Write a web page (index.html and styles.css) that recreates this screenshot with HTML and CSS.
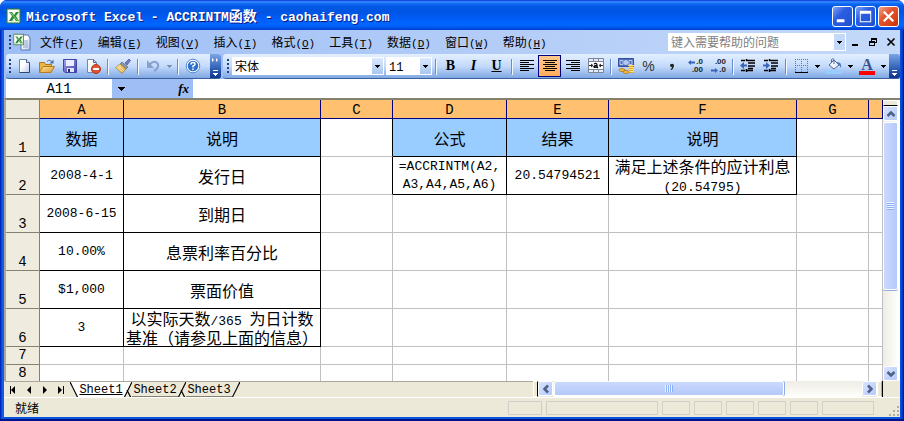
FILE: index.html
```html
<!DOCTYPE html>
<html lang="zh-CN">
<head>
<meta charset="utf-8">
<title>Microsoft Excel - ACCRINTM函数</title>
<link rel="stylesheet" href="styles.css">
</head>
<body>
<svg class="defs" aria-hidden="true">
  <defs>
    <linearGradient id="paper" x1="0" y1="0" x2="1" y2="1"><stop offset=".4" stop-color="#fff"/><stop offset="1" stop-color="#b4c8ea"/></linearGradient>
    <linearGradient id="disk" x1="0" y1="0" x2="1" y2="1"><stop offset="0" stop-color="#a4a5f0"/><stop offset="1" stop-color="#3b40a8"/></linearGradient>
    <linearGradient id="gold" x1="0" y1="0" x2="1" y2="1"><stop offset="0" stop-color="#ffe9a0"/><stop offset="1" stop-color="#d99628"/></linearGradient>
    <symbol id="down" viewBox="0 0 5 3"><path d="M0 0h5v1H4v1H3v1H2V2H1V1H0z"/></symbol>
    <symbol id="excel" viewBox="0 0 16 16"><path d="M1 1h13v14H1z" fill="#e9f3df" stroke="#2f7a36"/><path d="M2 2h9v10H2z" fill="#fff"/><path d="M3 4h3l2 3 2-3h3L10 8l3 5h-3l-2-3-2 3H3l3-5z" fill="#2c8c38"/><path d="M4 5h1l6 7h1" stroke="#8ccf70" fill="none"/></symbol>
    <symbol id="chevron" viewBox="0 0 10 10"><path d="M1.500 7 5 3.500 8.500 7" fill="none" stroke="#4d6185" stroke-width="2.500"/></symbol>
  </defs>
</svg>
<main class="window">
  <header class="titlebar">
    <svg class="app-icon" aria-hidden="true"><use href="#excel"/></svg>
    <h1><span>Microsoft Excel - ACCRINTM</span>函数<span> - caohaifeng.com</span></h1>
    <div class="caption-buttons">
      <button aria-label="最小化"><svg viewBox="0 0 20 20"><path d="M4 13h8v3H4z"/></svg></button>
      <button aria-label="最大化"><svg viewBox="0 0 20 20"><path d="M4 4h12v12H4zm1 3v8h10V7z" fill-rule="evenodd"/></svg></button>
      <button class="close" aria-label="关闭"><svg viewBox="0 0 20 20"><path d="m5 5 10 10M15 5 5 15" stroke="#fff" stroke-width="2.400"/></svg></button>
    </div>
  </header>

  <nav class="menubar" aria-label="菜单">
    <i class="grip"></i>
    <svg class="doc-icon" viewBox="0 0 18 18" aria-hidden="true"><path d="M8 2h7l2 3v12H8z" fill="url(#paper)" stroke="#5a78ac"/><path d="M10 8h5m-5 2h5m-5 2h5m-5 2h5" stroke="#8aa4d0"/><use href="#excel" width="12" height="13"/></svg>
    <button>文件<span>(<u>F</u>)</span></button>
    <button>编辑<span>(<u>E</u>)</span></button>
    <button>视图<span>(<u>V</u>)</span></button>
    <button>插入<span>(<u>I</u>)</span></button>
    <button>格式<span>(<u>O</u>)</span></button>
    <button>工具<span>(<u>T</u>)</span></button>
    <button>数据<span>(<u>D</u>)</span></button>
    <button>窗口<span>(<u>W</u>)</span></button>
    <button>帮助<span>(<u>H</u>)</span></button>
    <div class="ask"><input type="text" aria-label="键入需要帮助的问题" placeholder="键入需要帮助的问题"><button aria-label="展开"><svg class="arrow"><use href="#down"/></svg></button></div>
    <div class="doc-buttons">
      <button aria-label="最小化工作簿"><svg viewBox="0 0 10 10"><path d="M2 7h6v2H2z"/></svg></button>
      <button aria-label="还原工作簿"><svg viewBox="0 0 10 10"><path d="M3 1h6v5H7v3H1V4h2zm1 2v1h3v1h1V3zM2 6v2h4V6z" fill-rule="evenodd"/></svg></button>
      <button aria-label="关闭工作簿"><svg viewBox="0 0 10 10"><path d="m1.500 1.500 7 7m0-7-7 7" stroke="#000" stroke-width="1.600"/></svg></button>
    </div>
  </nav>

  <div class="toolbars">
    <div class="toolbar standard" role="toolbar" aria-label="常用">
      <i class="grip"></i>
      <button aria-label="新建"><svg viewBox="0 0 16 16"><path d="M3.500 1.500h7l3 3v10h-10z" fill="url(#paper)" stroke="#7088b0"/><path d="M13.500 4.500v10h-10" fill="none" stroke="#33476e"/><path d="M10.500 1.500v3h3" fill="#dbe6f8" stroke="#4a6290"/></svg></button>
      <button aria-label="打开"><svg viewBox="0 0 16 16"><path d="M.5 14.500v-10h5l1 2h6v3" fill="#e8b548" stroke="#b07a1c"/><path d="M.5 14.500 4 8.500h11.500l-3.500 6z" fill="url(#gold)" stroke="#b57d20"/><path d="M8 3.500q3-3 5 1" fill="none" stroke="#4b6fa8"/><path d="M14.500 1.500v4h-4z" fill="#4b6fa8"/></svg></button>
      <button aria-label="保存"><svg viewBox="0 0 16 16"><path d="M1.500 1.500h13v13H3l-1.500-1.500z" fill="url(#disk)" stroke="#4346a4"/><path d="M4 2h8v6H4z" fill="#e8eeff"/><path d="M5 10h7v4H5z" fill="#dfe4f4"/><path d="M6 11h2v3H6z" fill="#292d6e"/></svg></button>
      <button aria-label="权限"><svg viewBox="0 0 16 16"><path d="M2.500 1.500h6l3 3v10h-9z" fill="url(#paper)" stroke="#7088b0"/><path d="M8.500 1.500v3h3" fill="none" stroke="#4a6290"/><circle cx="11" cy="11" r="4.500" fill="#e05234" stroke="#b8351c"/><path d="M8 10h6v2H8z" fill="#fff"/></svg></button>
      <i class="sep"></i>
      <button aria-label="格式刷"><svg viewBox="0 0 16 16"><path d="m10 5 4-4 1.500 1.500L12 7z" fill="#6c79c4" stroke="#3d4784" stroke-width=".6"/><path d="m7 4 6 5-2 2-6-5z" fill="#8d94a8" stroke="#555d70" stroke-width=".6"/><path d="m5 6 6 5-4 4.500Q3 12 .5 9.500z" fill="url(#gold)" stroke="#a5833a" stroke-width=".7"/><path d="m2.500 9 5 5M4 8l5 5" stroke="#fff6c8" stroke-width=".7"/></svg></button>
      <i class="sep"></i>
      <button aria-label="撤消"><svg viewBox="0 0 16 16"><path d="M4 7q6-6 9-1 1 4-4 7" fill="none" stroke="#89a0cf" stroke-width="2.200"/><path d="M2 2v8h7z" fill="#89a0cf"/></svg></button>
      <button class="drop muted" aria-label="撤消列表"><svg class="arrow"><use href="#down"/></svg></button>
      <i class="sep"></i>
      <button aria-label="帮助"><svg viewBox="0 0 16 16"><circle cx="8" cy="8" r="6.800" fill="#fff" stroke="#5888cf"/><circle cx="8" cy="8" r="5.300" fill="#2d71cc"/><path d="M6 6.500Q6 4.500 8 4.500t2 1.700Q10 7.500 8 8v1.500M8 10.500v1.500" fill="none" stroke="#fff" stroke-width="1.500"/></svg></button>
      <button class="overflow" aria-label="工具栏选项"><svg viewBox="0 0 8 24"><path d="M0 4l2 2-2 2zM4 4l2 2-2 2zM1 16h5v1H1zM1 19h5v1H5v1H4v1H3v-1H2v-1H1z" fill="#fff"/></svg></button>
    </div>
    <div class="toolbar formatting" role="toolbar" aria-label="格式">
      <i class="grip"></i>
      <div class="pick font"><select aria-label="字体"><option>宋体</option></select><i><svg class="arrow"><use href="#down"/></svg></i></div>
      <div class="pick size"><select aria-label="字号"><option>11</option></select><i><svg class="arrow"><use href="#down"/></svg></i></div>
      <i class="sep"></i>
      <button class="letter"><b>B</b></button>
      <button class="letter"><em>I</em></button>
      <button class="letter"><u>U</u></button>
      <i class="sep"></i>
      <button aria-label="左对齐"><svg viewBox="0 0 16 16"><path d="M1 2.500h14M1 4.500h9M1 6.500h14M1 8.500h9M1 10.500h14M1 12.500h9" stroke="#000"/></svg></button>
      <button class="on" aria-label="居中" aria-pressed="true"><svg viewBox="0 0 16 16"><path d="M1 2.500h14M3 4.500h10M1 6.500h14M3 8.500h10M1 10.500h14M3 12.500h10" stroke="#000"/></svg></button>
      <button aria-label="右对齐"><svg viewBox="0 0 16 16"><path d="M1 2.500h14M6 4.500h9M1 6.500h14M6 8.500h9M1 10.500h14M6 12.500h9" stroke="#000"/></svg></button>
      <button aria-label="合并及居中"><svg viewBox="0 0 16 16"><path d="M.5.500h15v14H.5z" fill="#e4ecfb" stroke="#7d8699"/><path d="M0 3.500h16M0 11.500h16M5.500 0v4m5-4v4m-5 8v3m5-3v3" stroke="#7d8699"/><path d="M1 4h14v7H1z" fill="#fff"/><path d="M1 7.500h3m8 0h3M3 6l2 1.500L3 9m10-3-2 1.500L13 9" stroke="#222" fill="none"/><path d="M6 6q3-1.500 3 1v3M9 7.500q-3 0-3 1.200t3 .3l1 1" stroke="#000" stroke-width="1.300" fill="none"/></svg></button>
      <i class="sep"></i>
      <button aria-label="货币样式"><svg viewBox="0 0 16 16"><path d="M.5.500h15v8H.5z" fill="#5370bd" stroke="#33509b"/><path d="M2 2.500h3v4H2zM11 2.500h3v4h-3z" fill="none" stroke="#b5c8f2"/><circle cx="8" cy="4.500" r="2.500" fill="#b5c8f2"/><path d="M11 7h4v8h-4z" fill="#e6a52a"/><path d="M10 7.500h6m-6 2h6m-6 2h6m-6 2h6" stroke="#ffe17a"/><ellipse cx="4" cy="12" rx="3" ry="1.500" fill="#f2bf45" stroke="#a86c14" stroke-width=".7"/><ellipse cx="8" cy="14" rx="3" ry="1.500" fill="#f2bf45" stroke="#a86c14" stroke-width=".7"/></svg></button>
      <button class="percent">%</button>
      <button aria-label="千位分隔样式"><svg viewBox="0 0 16 16"><path d="M7 6q3-1 3 2-.5 3-3 4l-.5-.8Q8 10.500 8 9 6 9 6 7.500 6 6.300 7 6z" fill="#222"/></svg></button>
      <button class="decimal" aria-label="增加小数位数"><small><svg class="blue-arrow" viewBox="0 0 7 5"><path d="M3 0 0 2.500 3 5V3.500h4v-2H3z"/></svg>.0</small><small>.00</small></button>
      <button class="decimal" aria-label="减少小数位数"><small>.00</small><small><svg class="blue-arrow" viewBox="0 0 7 5"><path d="m4 0 3 2.500L4 5V3.500H0v-2h4z"/></svg>.0</small></button>
      <i class="sep"></i>
      <button aria-label="减少缩进量"><svg viewBox="0 0 16 16"><path d="M1 2.500h4m1 0h9M8 5h7M8 8h7M8 10.500h5M1 12.500h4m1 0h7M6.500 1v2m0 8v3" stroke="#000" stroke-width="1.500"/><path d="M4 4 0 7.500 4 11V8.500h3v-2H4z" fill="#3865b7"/></svg></button>
      <button aria-label="增加缩进量"><svg viewBox="0 0 16 16"><path d="M1 2.500h4m1 0h9M8 5h7M8 8h7M8 10.500h5M1 12.500h4m1 0h7M6.500 1v2m0 8v3" stroke="#000" stroke-width="1.500"/><path d="m3 4 4 3.500L3 11V8.500H0v-2h3z" fill="#3865b7"/></svg></button>
      <i class="sep"></i>
      <button aria-label="边框"><svg viewBox="0 0 16 16"><path d="M2 1.500h13M2 7.500h13M2.500 1v13M8.500 1v13M14.500 1v13" stroke="#657594" stroke-dasharray="1 1"/><path d="M2 14.500h13" stroke="#000"/></svg></button>
      <button class="drop" aria-label="边框选项"><svg class="arrow"><use href="#down"/></svg></button>
      <button aria-label="填充颜色"><svg viewBox="0 0 16 16"><path d="m3 7 5-5 5 5-5 4z" fill="#edf3ff" stroke="#53678f"/><path d="M8 6V1.500Q7-.2 5.500 1.500V5" fill="none" stroke="#53678f"/><path d="M11 4q5 0 4 6-1-3-3-3z" fill="#4576c4"/><path d="M0 12h16v4H0z" fill="#99ccff"/></svg></button>
      <button class="drop" aria-label="填充颜色选项"><svg class="arrow"><use href="#down"/></svg></button>
      <button class="font-color">A</button>
      <button class="drop" aria-label="字体颜色选项"><svg class="arrow"><use href="#down"/></svg></button>
      <button class="overflow" aria-label="工具栏选项"><svg viewBox="0 0 8 24"><path d="M1 16h5v1H1zM1 19h5v1H5v1H4v1H3v-1H2v-1H1z" fill="#fff"/></svg></button>
    </div>
  </div>

  <div class="formula-bar">
    <input class="name-box" type="text" value="A11" aria-label="名称框">
    <button class="name-arrow" aria-label="名称列表"><svg viewBox="0 0 7 4"><path d="M0 0h7v1H6v1H5v1H4v1H3V3H2V2H1V1H0z"/></svg></button>
    <button class="fx"><i>fx</i></button>
    <input class="formula" type="text" aria-label="编辑栏">
  </div>

  <section class="sheet">
    <div class="cells">
      <table>
        <colgroup><col class="w-head"><col class="w-a"><col class="w-b"><col class="w-c"><col class="w-d"><col class="w-e"><col class="w-f"><col class="w-c"><col></colgroup>
        <thead><tr><td class="corner"></td><th>A</th><th>B</th><th>C</th><th>D</th><th>E</th><th>F</th><th>G</th><th></th></tr></thead>
        <tbody>
          <tr class="tall"><th>1</th><td class="box blue">数据</td><td class="box blue">说明</td><td class="edge"></td><td class="box blue">公式</td><td class="box blue">结果</td><td class="box blue">说明</td><td></td><td></td></tr>
          <tr class="tall"><th>2</th><td class="box num">2008-4-1</td><td class="box">发行日</td><td class="edge"></td><td class="box num">=ACCRINTM(A2,<br>A3,A4,A5,A6)</td><td class="box num">20.54794521</td><td class="box">满足上述条件的应计利息<br><span class="num">(20.54795)</span></td><td></td><td></td></tr>
          <tr class="tall"><th>3</th><td class="box num">2008-6-15</td><td class="box">到期日</td><td></td><td></td><td></td><td></td><td></td><td></td></tr>
          <tr class="tall"><th>4</th><td class="box num">10.00%</td><td class="box">息票利率百分比</td><td></td><td></td><td></td><td></td><td></td><td></td></tr>
          <tr class="tall"><th>5</th><td class="box num">$1,000</td><td class="box">票面价值</td><td></td><td></td><td></td><td></td><td></td><td></td></tr>
          <tr class="tall"><th>6</th><td class="box num">3</td><td class="box">以实际天数<span class="num">/365 </span>为日计数<br>基准（请参见上面的信息）</td><td></td><td></td><td></td><td></td><td></td><td></td></tr>
          <tr><th>7</th><td></td><td></td><td></td><td></td><td></td><td></td><td></td><td></td></tr>
          <tr><th>8</th><td></td><td></td><td></td><td></td><td></td><td></td><td></td><td></td></tr>
        </tbody>
      </table>
    </div>
    <div class="vscroll">
      <i class="split"></i>
      <button aria-label="向上滚动"><svg><use href="#chevron"/></svg></button>
      <div class="track"><i class="thumb"><i class="ridges"></i></i></div>
      <button class="flip" aria-label="向下滚动"><svg><use href="#chevron"/></svg></button>
    </div>
  </section>

  <div class="tab-row">
    <div class="tabs">
      <button class="nav" aria-label="第一张"><svg viewBox="0 0 8 8"><path d="M1 0h1v8H1zM6 0v8L2 4z"/></svg></button>
      <button class="nav" aria-label="上一张"><svg viewBox="0 0 8 8"><path d="M6 0v8L2 4z"/></svg></button>
      <button class="nav" aria-label="下一张"><svg viewBox="0 0 8 8"><path d="M2 0v8l4-4z"/></svg></button>
      <button class="nav" aria-label="最后一张"><svg viewBox="0 0 8 8"><path d="M1 0v8l4-4zM6 0h1v8H6z"/></svg></button>
      <svg class="slant" viewBox="0 0 8 16"><path d="M0 0h8v16z" fill="#fff"/><path d="m0 0 8 16" stroke="#000" stroke-width="1.200"/></svg>
      <button class="tab active">Sheet1</button>
      <svg class="slant" viewBox="0 0 8 16"><path d="M0 0h8L0 16z" fill="#fff"/><path d="M8 0 0 16M3 8l4 8" stroke="#000" stroke-width="1.200"/></svg>
      <button class="tab">Sheet2</button>
      <svg class="slant" viewBox="0 0 8 16"><path d="M8 0 0 16M3 8l4 8" stroke="#000" stroke-width="1.200"/></svg>
      <button class="tab">Sheet3</button>
      <svg class="slant" viewBox="0 0 8 16"><path d="M8 0 0 16" stroke="#000" stroke-width="1.200"/></svg>
    </div>
    <div class="hscroll">
      <i class="split"></i>
      <button class="left" aria-label="向左滚动"><svg><use href="#chevron"/></svg></button>
      <div class="track"><i class="thumb"><i class="ridges"></i></i></div>
      <button class="right" aria-label="向右滚动"><svg><use href="#chevron"/></svg></button>
      <i class="split"></i>
    </div>
  </div>

  <footer class="status">
    <span>就绪</span>
    <i class="panel w34"></i><i class="panel w112"></i><i class="panel"></i><i class="panel"></i><i class="panel"></i><i class="panel"></i><i class="panel"></i><i class="panel w52"></i>
    <svg class="resize" viewBox="0 0 12 12" aria-hidden="true"><path d="M9 1h2v2H9zM5 5h2v2H5zM9 5h2v2H9zM1 9h2v2H1zM5 9h2v2H5zM9 9h2v2H9z" fill="#b3ae9a"/></svg>
  </footer>
</main>
</body>
</html>
```
FILE: styles.css
```css
* { box-sizing: border-box; }

body {
  margin: 0;
  background: #fff;
  color: #000;
  font: 12px/16px "Noto Sans CJK SC", sans-serif;
}

button, input, select {
  margin: 0;
  padding: 0;
  border: 0;
  border-radius: 0;
  background: none;
  color: inherit;
  font: inherit;
}

button {
  display: flex;
  flex: none;
  align-items: center;
  justify-content: center;
}

svg { display: block; flex: none; }
.defs { position: absolute; width: 0; height: 0; }
.arrow { width: 5px; height: 3px; }

.window {
  display: flex;
  flex-direction: column;
  height: 100vh;
  overflow: hidden;
  padding: 0 4px 4px;
  border-radius: 7px 7px 0 0;
  background: linear-gradient(90deg, #001da0, #0831d9 1px, #166aee 3px, #0855dd 4px, #0855dd calc(100% - 4px), #0040d8 calc(100% - 2px), #00138c);
  box-shadow: inset 0 -2px #00138c;
}

/* Title bar */
.titlebar {
  display: flex;
  flex: none;
  align-items: center;
  gap: 4px;
  height: 30px;
  margin: 0 -4px;
  padding: 2px 5px 0 6px;
  background: linear-gradient(#0831d9, #3a93ff 2px, #1573f8 3px, #0458e6 6px, #0054e3 12px, #0060fc 20px, #0066ff 25px, #005bf0 27px, #003dd0);
}
.app-icon { width: 16px; height: 16px; }
.titlebar h1 {
  flex: 1;
  margin: 0;
  overflow: hidden;
  color: #fff;
  font-size: 14px;
  font-weight: bold;
  line-height: 20px;
  text-shadow: 1px 1px #0a1883;
  white-space: pre;
}
.titlebar h1 span { font-family: "Liberation Mono", monospace; font-size: 13px; }
.caption-buttons { display: flex; gap: 2px; }
.caption-buttons button {
  width: 21px;
  height: 21px;
  border: 1px solid #fff;
  border-radius: 3px;
  background: linear-gradient(135deg, #7da2f5, #2a5ce0 40%, #2459dc 70%, #1b4dc4);
}
.caption-buttons .close { background: linear-gradient(135deg, #f2a48c, #e2552f 40%, #d8431b 75%, #b7300e); }
.caption-buttons svg { width: 19px; height: 19px; fill: #fff; }

/* Menu bar */
.menubar {
  display: flex;
  flex: none;
  align-items: center;
  height: 24px;
  padding: 0 4px 0 5px;
  background: linear-gradient(90deg, #9ebef5, #c4d9f9);
}
.menubar > button { align-items: baseline; margin-right: 14px; white-space: nowrap; }
.menubar > button span { font: 11px/14px "Liberation Mono", monospace; }
.grip {
  flex: none;
  width: 2px;
  height: 14px;
  background: repeating-linear-gradient(#27417f 0 2px, transparent 2px 4px);
}
.doc-icon { width: 18px; height: 18px; margin: 0 9px 0 2px; }
.ask {
  display: flex;
  width: 178px;
  height: 18px;
  margin-left: auto;
  padding: 1px;
  background: #fff;
}
.ask input { flex: 1; min-width: 0; padding-left: 2px; }
.ask input::placeholder { color: #808080; opacity: 1; }
.ask button { width: 11px; background: #c4d9f9; }
.doc-buttons { display: flex; gap: 8px; margin-left: 4px; }
.doc-buttons svg { width: 10px; height: 10px; }

/* Toolbars */
.toolbars {
  display: flex;
  flex: none;
  gap: 2px;
  height: 25px;
  padding-left: 2px;
  background: #9ebef5;
}
.toolbar {
  display: flex;
  align-items: center;
  height: 25px;
  overflow: hidden;
  border-bottom: 1px solid #3b619c;
  border-radius: 3px;
  background: linear-gradient(#e3efff, #c4dbfb 50%, #80a8e4);
}
.toolbar > .grip { margin: 0 1px 0 3px; }
.standard { flex: 0 0 215px; }
.formatting { flex: 1; }
.formatting > .grip { margin: 0 3px 0 4px; }
.toolbar > button { width: 23px; height: 22px; }
.toolbar > button > svg { width: 16px; height: 16px; }
.toolbar > button > .arrow { width: 5px; height: 3px; }
.toolbar > .drop { width: 10px; }
.toolbar > .muted { fill: #7f8fae; }
.toolbar > .on { border: 1px solid #000080; background: linear-gradient(#ffc88e, #ffae5c); }
.toolbar > .overflow {
  width: 11px;
  height: 25px;
  margin-left: auto;
  background: linear-gradient(#7ba4e6, #2d5eb4 60%, #0c2f8c);
}
.toolbar > .overflow > svg { width: 8px; height: 24px; }
.sep {
  flex: none;
  width: 1px;
  height: 15px;
  margin: 0 3px;
  background: #6a8ccb;
  box-shadow: 1px 1px #f1f9ff;
}
.pick {
  position: relative;
  height: 18px;
  padding: 1px;
  background: #fff;
}
.pick select { appearance: none; width: 100%; height: 16px; padding-left: 2px; outline: 0; }
.pick > i {
  position: absolute;
  top: 1px;
  right: 1px;
  bottom: 1px;
  display: grid;
  place-items: center;
  width: 11px;
  background: linear-gradient(#dce9fd, #a9c5f0);
  pointer-events: none;
}
.font { flex: 0 0 152px; margin-right: 2px; }
.size { flex: 0 0 46px; }
.size select { font: 12px/14px "Liberation Mono", monospace; }
.letter { font: bold 14px/16px "Liberation Serif", serif; }
.percent { color: #333; font: 14px/16px "Liberation Sans", sans-serif; }
.toolbar > .decimal { flex-direction: column; align-items: flex-end; padding-right: 3px; }
.decimal small {
  display: flex;
  align-items: center;
  gap: 1px;
  color: #222;
  font: bold 8px/8px "Liberation Sans", sans-serif;
}
.toolbar .blue-arrow { width: 7px; height: 5px; fill: #3865b7; }
.toolbar > .font-color {
  width: 16px;
  height: 17px;
  margin: 0 3px 0 4px;
  border-bottom: 4px solid #f00;
  color: #35558f;
  font: bold 16px/13px "Liberation Serif", serif;
}

/* Formula bar */
.formula-bar {
  display: flex;
  flex: none;
  height: 19px;
  padding-left: 2px;
  background: #9ebef5;
}
.name-box {
  width: 106px;
  padding-top: 2px;
  background: #fff;
  font: 14px/17px "Liberation Mono", monospace;
  text-align: center;
}
.name-arrow { width: 19px; }
.name-arrow svg { width: 7px; height: 4px; }
.fx { width: 62px; justify-content: flex-end; padding-right: 4px; font: bold 13px/16px "Liberation Serif", serif; }
.formula { flex: 1; min-width: 0; background: #fff; }

/* Sheet */
.sheet {
  display: flex;
  flex: 1;
  min-height: 0;
  padding-right: 2px;
  border-top: 2px solid #85816f;
  border-left: 2px solid #aca899;
  background: #fff;
}
.cells { flex: 1; min-width: 0; overflow: hidden; }
table {
  width: 100%;
  table-layout: fixed;
  border-collapse: separate;
  border-spacing: 0;
  font-size: 16px;
  line-height: 18px;
}
.w-head { width: 34px; }
.w-a { width: 84px; }
.w-b { width: 197px; }
.w-c { width: 72px; }
.w-d { width: 114px; }
.w-e { width: 102px; }
.w-f { width: 188px; }
tr { height: 18px; }
thead tr { height: 19px; }
.tall { height: 38px; }
td, th {
  padding: 0;
  border: solid #c0c0c0;
  border-width: 0 1px 1px 0;
  text-align: center;
  white-space: nowrap;
}
th { font: 14px/16px "Liberation Mono", monospace; }
thead th { padding-top: 2px; border-color: #000080; background: #ffc070; }
.corner, tbody th { border-color: #85816f; background: #efebde; }
tbody th { vertical-align: top; }
.tall th { vertical-align: bottom; }
.box { border-color: #000; }
.edge { border-right-color: #000; }
.blue { background: #99ccff; }
.num { font: 13px/18px "Liberation Mono", monospace; white-space: pre; }
span.num { line-height: 12px; }

/* Scroll bars */
.vscroll { display: flex; flex: none; flex-direction: column; width: 15px; background: #f3f2ea; }
.vscroll .split { height: 6px; border: 1px solid #fff; border-bottom: 1px solid #000; background: #ece9d8; }
.vscroll button, .hscroll button {
  width: 15px;
  height: 15px;
  border: 1px solid #fff;
  border-radius: 2px;
  background: linear-gradient(135deg, #d7e3fe, #b6cafa);
}
.vscroll svg, .hscroll svg { width: 10px; height: 10px; }
.flip svg { transform: rotate(180deg); }
.left svg { transform: rotate(-90deg); }
.right svg { transform: rotate(90deg); }
.track { flex: 1; padding: 1px 0; background: linear-gradient(90deg, #eeede5, #fefefb); }
.thumb {
  display: grid;
  place-items: center;
  height: 69%;
  border: 1px solid #fff;
  border-radius: 2px;
  background: linear-gradient(90deg, #cbd9fd, #b4c9f9);
  box-shadow: 0 1px #93acdf;
}
.ridges { width: 7px; height: 8px; background: repeating-linear-gradient(#eef4fe 0 1px, #8cb0f8 1px 2px); }

/* Sheet tabs */
.tab-row { display: flex; flex: none; height: 16px; padding-left: 1px; background: #ece9d8; }
.tabs { display: flex; flex: 1; min-width: 0; border-top: 1px solid #aca899; }
.nav { width: 16px; }
.nav svg { width: 8px; height: 8px; }
.nav + .slant { margin-left: 1px; }
.slant { width: 8px; height: 16px; }
.tab { width: 46px; height: 15px; padding-top: 2px; border-bottom: 1px solid #85816f; font: 12px/12px "Liberation Mono", monospace; }
.active { background: #fff; border-color: #fff; text-decoration: underline; }
.hscroll { display: flex; flex: 0 1 350px; margin-right: 17px; border-right: 1px solid #000; }
.hscroll .split { flex: none; width: 5px; border: 1px solid #fff; border-right-color: #000; background: #ece9d8; }
.hscroll .split:last-child { border-right-color: #aca899; }
.hscroll .track { padding: 0 1px; background: linear-gradient(#eeede5, #fefefb); }
.hscroll .thumb { width: 75%; height: 15px; background: linear-gradient(#cbd9fd, #b4c9f9); box-shadow: 1px 0 #93acdf; }
.hscroll .ridges { width: 8px; height: 7px; background: repeating-linear-gradient(90deg, #eef4fe 0 1px, #8cb0f8 1px 2px); }

/* Status bar */
.status {
  display: flex;
  flex: none;
  align-items: center;
  gap: 4px;
  height: 20px;
  padding-left: 11px;
  border-top: 1px solid #fff;
  background: #ece9d8;
}
.status span { flex: 1; }
.panel { flex: 0 1 28px; height: 14px; border: 1px solid #d0cfc8; }
.w34 { flex-basis: 34px; }
.w112 { flex-basis: 112px; }
.w52 { flex-basis: 52px; }
.resize { width: 12px; height: 12px; margin-left: 10px; align-self: flex-end; }
```
